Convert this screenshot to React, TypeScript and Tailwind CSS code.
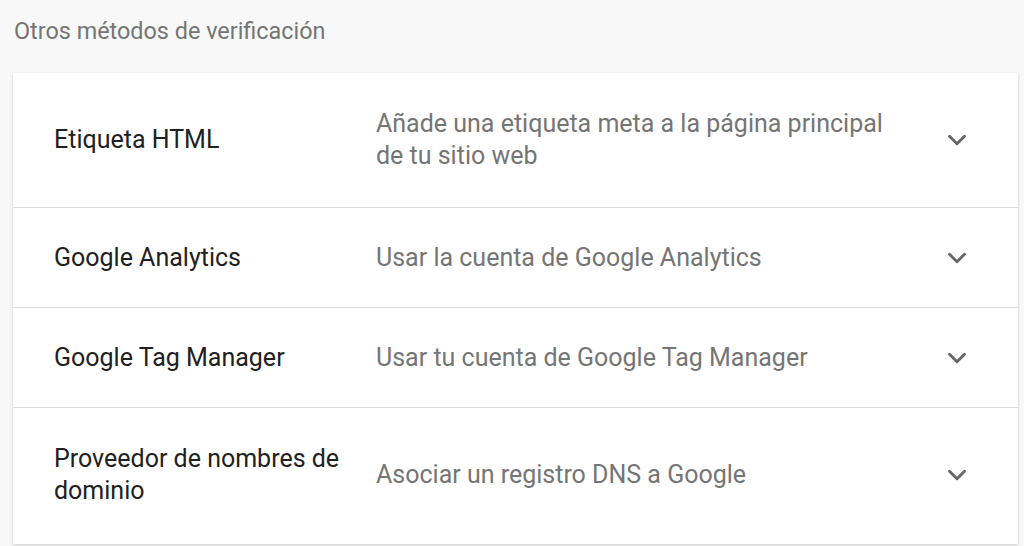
import { ChevronDown } from 'lucide-react';

const methods = [
  { label: 'Etiqueta HTML', desc: 'Añade una etiqueta meta a la página principal de tu sitio web', pad: 'py-[35px]' },
  { label: 'Google Analytics', desc: 'Usar la cuenta de Google Analytics', pad: 'h-[100px]' },
  { label: 'Google Tag Manager', desc: 'Usar tu cuenta de Google Tag Manager', pad: 'h-[100px]' },
  { label: 'Proveedor de nombres de dominio', desc: 'Asociar un registro DNS a Google', pad: 'pt-[35px] pb-[37px]' },
];

export default function App() {
  return (
    <div className="min-h-screen bg-[#f8f8f8] font-['Roboto',sans-serif]">
      <div className="pl-[14px] pt-[16px] text-[23.4px] leading-[30px] text-[#757575]">
        Otros métodos de verificación
      </div>

      <div className="ml-[13px] mr-[6px] mt-[27px] bg-white shadow-[0_1px_3px_rgba(0,0,0,0.18)]">
        {methods.map((m, i) => (
          <div
            key={m.label}
            className={`flex items-center pl-[41px] pr-[46px] ${m.pad} ${i > 0 ? 'border-t border-[#dcdcdc]' : ''}`}
          >
            <div className="w-[300px] shrink-0 text-[25px] leading-[32px] text-[#212121]">{m.label}</div>
            <div className="ml-[22px] w-[530px] text-[25px] leading-[32px] text-[#757575]">{m.desc}</div>
            <div className="ml-auto flex items-center">
              <ChevronDown size={30} strokeWidth={2.3} className="text-[#666666]" />
            </div>
          </div>
        ))}
      </div>
    </div>
  );
}
